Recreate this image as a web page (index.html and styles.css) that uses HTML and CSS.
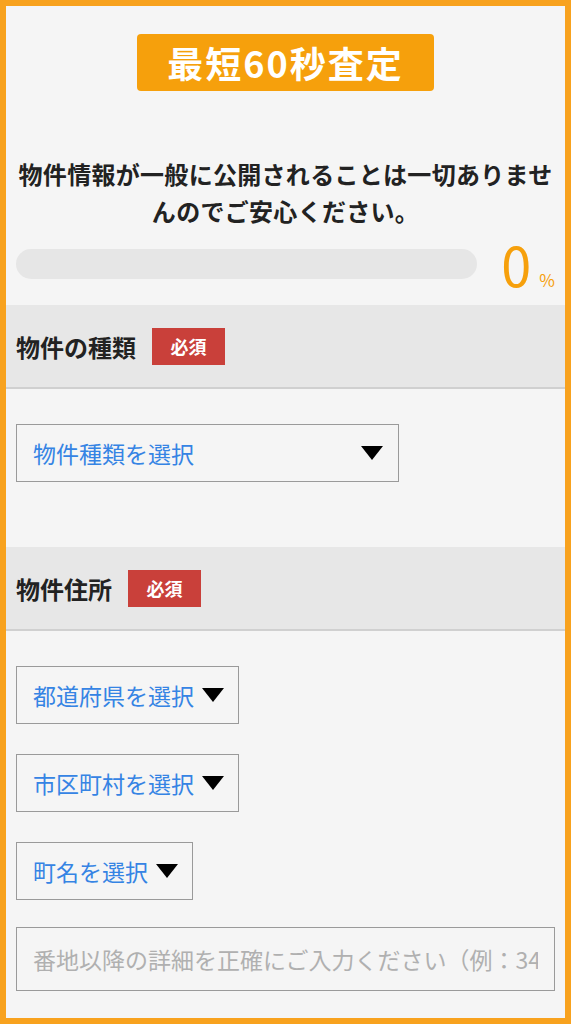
FILE: index.html
```html
<!DOCTYPE html>
<html lang="ja">
<head>
  <meta charset="utf-8">
  <title>最短60秒査定</title>
  <link rel="stylesheet" href="styles.css">
</head>
<body>
  <div class="page">
    <div class="hero">
      <span class="hero-badge">最短60秒査定</span>
    </div>
    <p class="notice">物件情報が一般に公開されることは一切ありませんのでご安心ください。</p>

    <div class="progress">
      <div class="progress-bar"><div class="progress-fill" style="width: 0%"></div></div>
      <div class="progress-num">0<span class="pct">%</span></div>
    </div>

    <div class="section-head">
      <span class="section-title">物件の種類</span>
      <span class="req">必須</span>
    </div>
    <div class="fields">
      <div class="select select-wide">
        <span>物件種類を選択</span>
        <svg class="tri" width="22" height="14" viewBox="0 0 22 14"><polygon points="0,0 22,0 11,14" fill="#000"/></svg>
      </div>
    </div>

    <div class="section-head section-gap">
      <span class="section-title">物件住所</span>
      <span class="req">必須</span>
    </div>
    <div class="fields">
      <div class="select">
        <span>都道府県を選択</span>
        <svg class="tri" width="22" height="14" viewBox="0 0 22 14"><polygon points="0,0 22,0 11,14" fill="#000"/></svg>
      </div>
      <div class="select">
        <span>市区町村を選択</span>
        <svg class="tri" width="22" height="14" viewBox="0 0 22 14"><polygon points="0,0 22,0 11,14" fill="#000"/></svg>
      </div>
      <div class="select">
        <span>町名を選択</span>
        <svg class="tri" width="22" height="14" viewBox="0 0 22 14"><polygon points="0,0 22,0 11,14" fill="#000"/></svg>
      </div>
      <input class="address" type="text" placeholder="番地以降の詳細を正確にご入力ください（例：34-5）">
    </div>
  </div>
</body>
</html>
```

FILE: styles.css
```css
* { box-sizing: border-box; }
body {
  margin: 0;
  font-family: "Noto Sans CJK JP", "Noto Sans", sans-serif;
  color: #222;
  background: #f5f5f5;
  text-spacing-trim: space-all;
}
.page {
  min-height: 100vh;
  border: 6px solid #f8a21e;
  background: #f5f5f5;
  padding-bottom: 26px;
}
.hero { text-align: center; padding-top: 28px; }
.hero-badge {
  display: inline-block;
  background: #f6a00c;
  color: #fff;
  font-size: 36px;
  font-weight: bold;
  letter-spacing: 2px;
  height: 57px; line-height: 57px;
  padding: 0 30px;
  border-radius: 4px;
}
.notice {
  margin: 64px 0 0;
  padding: 0 10px;
  text-align: center;
  font-size: 24px;
  letter-spacing: 0.3px;
  font-weight: bold;
  line-height: 37px;
}
.progress {
  display: flex; align-items: center;
  height: 30px;
  margin-top: 20px;
  padding: 0 10px;
  gap: 24px;
}
.progress-bar {
  flex: 1; height: 30px;
  border-radius: 15px;
  background: #e6e6e6;
  overflow: hidden;
}
.progress-fill { height: 100%; background: #f6a00c; }
.progress-num {
  display: flex; align-items: baseline;
  height: 30px; line-height: 30px;
  color: #f6a00c;
  font-size: 54px;
}
.pct { font-size: 17px; margin-left: 8px; }
.section-head {
  display: flex; align-items: center; gap: 16px;
  margin-top: 26px;
  height: 84px;
  padding: 0 10px;
  background: #e7e7e7;
  border-bottom: 2px solid #d0d0d0;
}
.section-gap { margin-top: 65px; }
.section-title { font-size: 24px; font-weight: bold; }
.req {
  display: inline-block;
  width: 73px; height: 37px; line-height: 37px;
  text-align: center;
  background: #c9403a;
  color: #fff;
  font-size: 18px;
  font-weight: bold;
}
.fields {
  display: flex; flex-direction: column; align-items: flex-start;
  gap: 30px;
  padding: 35px 10px 0;
}
.select {
  display: flex; align-items: center; gap: 8px;
  height: 58px;
  padding: 0 14px 0 16px;
  border: 1px solid #9a9a9a;
  background: #f5f5f5;
  color: #3584e4;
  font-size: 23px;
}
.select-wide { width: 383px; justify-content: space-between; padding-right: 15px; }
.tri { flex: none; }
.address {
  align-self: stretch;
  height: 64px;
  margin-top: -3px;
  padding: 0 16px;
  border: 1px solid #9a9a9a;
  background: #f5f5f5;
  font-family: inherit;
  font-size: 23px;
  color: #222;
}
.address::placeholder { color: #b0b0b0; }
```
